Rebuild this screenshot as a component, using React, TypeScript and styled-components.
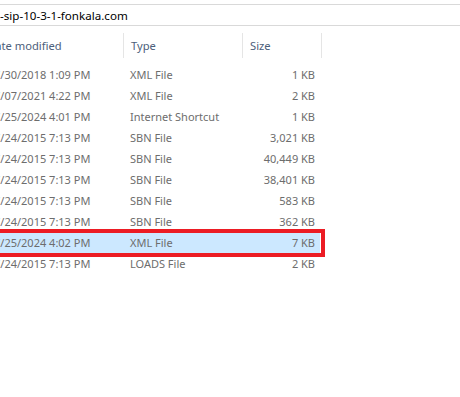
import React from "react";
import styled, { createGlobalStyle } from "styled-components";

const Global = createGlobalStyle`
  html, body { margin: 0; padding: 0; background: #ffffff; overflow: hidden; }
  body { font-family: "Noto Sans", "Open Sans", sans-serif; font-size: 11px; }
`;

const Page = styled.div`
  width: 460px;
  height: 397px;
  overflow: hidden;
  background: #ffffff;
  padding-top: 4px;
  box-sizing: border-box;
`;

const AddressBar = styled.div`
  height: 20px;
  border-top: 1px solid #d9d9d9;
  border-bottom: 1px solid #d9d9d9;
  display: flex;
  align-items: center;
  color: #000000;
  font-size: 11.6px;
  white-space: nowrap;
`;

const Table = styled.div`
  margin-left: -30px;
  display: flex;
  flex-direction: column;
`;

const grid = `
  display: grid;
  grid-template-columns: 153px 119px 80px;
`;

const HeaderRow = styled.div`
  ${grid}
  height: 38px;
  align-items: center;
`;

const HeaderCell = styled.div<{ $first?: boolean; $last?: boolean }>`
  height: 25px;
  display: flex;
  align-items: center;
  color: #4c607a;
  font-size: 11.2px;
  padding-left: ${(p) => (p.$first ? "17px" : "7px")};
  border-left: ${(p) => (p.$first ? "none" : "1px solid #e5e5e5")};
  border-right: ${(p) => (p.$last ? "1px solid #e5e5e5" : "none")};
  white-space: nowrap;
`;

const Row = styled.div<{ $selected?: boolean }>`
  ${grid}
  height: 21px;
  align-items: center;
  color: #6d6d6d;
  font-size: 11px;
  position: relative;
  width: 350px;
  background: ${(p) => (p.$selected ? "#cce8ff" : "transparent")};
  &::after {
    content: "";
    display: ${(p) => (p.$selected ? "block" : "none")};
    position: absolute;
    left: 26px;
    right: -5px;
    top: -3px;
    bottom: -4px;
    border: 4px solid #ec1c24;
    pointer-events: none;
  }
`;

const Cell = styled.div<{ $align?: string; $pad?: string }>`
  white-space: nowrap;
  overflow: hidden;
  text-align: ${(p) => p.$align || "left"};
  padding: ${(p) => p.$pad || "0"};
`;

const Rows = styled.div`
  display: flex;
  flex-direction: column;
`;

type FileRow = { date: string; type: string; size: string; selected?: boolean };

const files: FileRow[] = [
  { date: "7/30/2018 1:09 PM", type: "XML File", size: "1 KB" },
  { date: "7/07/2021 4:22 PM", type: "XML File", size: "2 KB" },
  { date: "7/25/2024 4:01 PM", type: "Internet Shortcut", size: "1 KB" },
  { date: "7/24/2015 7:13 PM", type: "SBN File", size: "3,021 KB" },
  { date: "7/24/2015 7:13 PM", type: "SBN File", size: "40,449 KB" },
  { date: "7/24/2015 7:13 PM", type: "SBN File", size: "38,401 KB" },
  { date: "7/24/2015 7:13 PM", type: "SBN File", size: "583 KB" },
  { date: "7/24/2015 7:13 PM", type: "SBN File", size: "362 KB" },
  { date: "7/25/2024 4:02 PM", type: "XML File", size: "7 KB", selected: true },
  { date: "7/24/2015 7:13 PM", type: "LOADS File", size: "2 KB" },
];

export default function App() {
  return (
    <>
      <Global />
      <Page>
        <AddressBar>-sip-10-3-1-fonkala.com</AddressBar>
        <Table>
          <HeaderRow>
            <HeaderCell $first>Date modified</HeaderCell>
            <HeaderCell>Type</HeaderCell>
            <HeaderCell $last>Size</HeaderCell>
          </HeaderRow>
          <Rows>
            {files.map((f, i) => (
              <Row key={i} $selected={f.selected}>
                <Cell $pad="0 0 0 24px">{f.date}</Cell>
                <Cell $pad="0 0 0 7px">{f.type}</Cell>
                <Cell $align="right" $pad="0 7px 0 0">{f.size}</Cell>
              </Row>
            ))}
          </Rows>
        </Table>
      </Page>
    </>
  );
}
